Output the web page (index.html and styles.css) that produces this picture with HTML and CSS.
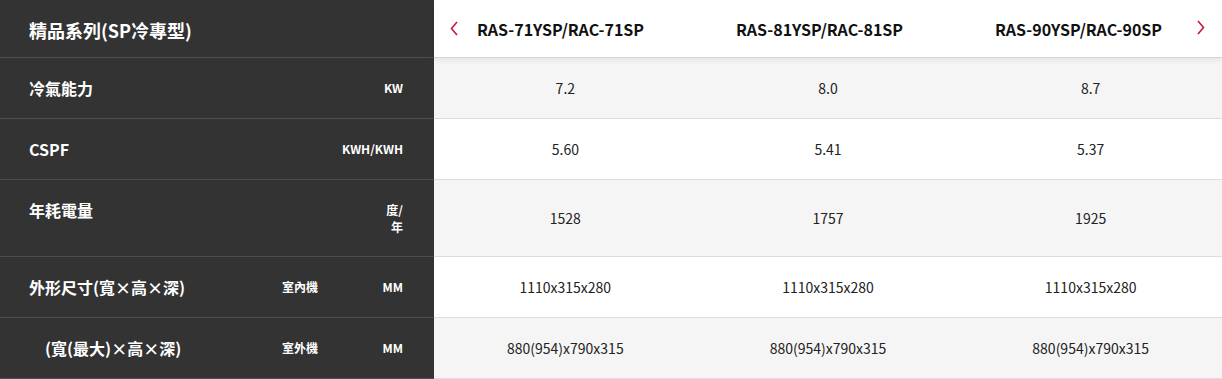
FILE: index.html
```html
<!DOCTYPE html>
<html lang="zh-Hant">
<head>
<meta charset="utf-8">
<title>精品系列(SP冷專型)</title>
<link rel="stylesheet" href="styles.css">
</head>
<body>
<div class="spec">
  <div class="row row-head">
    <div class="side side-head">
      <div class="title">精品系列(SP冷專型)</div>
    </div>
    <div class="models">
      <button class="nav nav-prev" aria-label="上一個">
        <svg width="8" height="15" viewBox="0 0 8 15"><path d="M7 1 L1.5 7.5 L7 14" fill="none" stroke="currentColor" stroke-width="1.6"/></svg>
      </button>
      <div class="model-list">
        <div class="model">RAS-71YSP/RAC-71SP</div>
        <div class="model">RAS-81YSP/RAC-81SP</div>
        <div class="model">RAS-90YSP/RAC-90SP</div>
      </div>
      <button class="nav nav-next" aria-label="下一個">
        <svg width="8" height="15" viewBox="0 0 8 15"><path d="M1 1 L6.5 7.5 L1 14" fill="none" stroke="currentColor" stroke-width="1.6"/></svg>
      </button>
    </div>
  </div>

  <div class="row shade">
    <div class="side"><div class="label">冷氣能力</div><div class="sub"></div><div class="unit">KW</div></div>
    <div class="cells"><div class="cell">7.2</div><div class="cell">8.0</div><div class="cell">8.7</div></div>
  </div>

  <div class="row">
    <div class="side"><div class="label">CSPF</div><div class="sub"></div><div class="unit">KWH/KWH</div></div>
    <div class="cells"><div class="cell">5.60</div><div class="cell">5.41</div><div class="cell">5.37</div></div>
  </div>

  <div class="row shade">
    <div class="side"><div class="label">年耗電量</div><div class="sub"></div><div class="unit">度/<br>年</div></div>
    <div class="cells"><div class="cell">1528</div><div class="cell">1757</div><div class="cell">1925</div></div>
  </div>

  <div class="row">
    <div class="side"><div class="label">外形尺寸(寬×高×深)</div><div class="sub">室內機</div><div class="unit">MM</div></div>
    <div class="cells"><div class="cell">1110x315x280</div><div class="cell">1110x315x280</div><div class="cell">1110x315x280</div></div>
  </div>

  <div class="row shade">
    <div class="side"><div class="label indent">(寬(最大)×高×深)</div><div class="sub">室外機</div><div class="unit">MM</div></div>
    <div class="cells"><div class="cell">880(954)x790x315</div><div class="cell">880(954)x790x315</div><div class="cell">880(954)x790x315</div></div>
  </div>
</div>
</body>
</html>
```

FILE: styles.css
```css
html, body {
  margin: 0;
  padding: 0;
  background: #ffffff;
}

body {
  font-family: "Noto Sans CJK TC", "Noto Sans", "Liberation Sans", sans-serif;
  color: #222222;
}

.spec {
  display: flex;
  flex-direction: column;
  width: 1222px;
}

.row {
  display: flex;
  min-height: 61px;
}

.side {
  width: 434px;
  flex: none;
  box-sizing: border-box;
  background: #333333;
  color: #ffffff;
  border-bottom: 1px solid #4e4e4e;
  display: grid;
  grid-template-columns: 253px 1fr auto;
  padding: 0 31px 0 29px;
}

.label {
  font-size: 16px;
  font-weight: 700;
  line-height: 24px;
  padding-top: 18px;
}

.label.indent {
  padding-left: 16px;
}

.sub,
.unit {
  font-size: 12px;
  font-weight: 700;
  line-height: 17px;
  padding: 21px 0 21px;
}

.unit {
  text-align: right;
}

.cells {
  flex: 1;
  display: grid;
  grid-template-columns: repeat(3, 1fr);
  border-bottom: 1px solid #dddddd;
  background: #ffffff;
}

.shade .cells {
  background: #f5f5f5;
}

.cell {
  display: flex;
  align-items: center;
  justify-content: center;
  font-size: 14px;
  line-height: 20px;
  color: #222222;
}

/* header row */
.row-head {
  min-height: 58px;
  position: relative;
  z-index: 1;
}

.side-head {
  display: flex;
  align-items: center;
  padding-top: 2px;
}

.title {
  font-size: 18px;
  font-weight: 700;
  line-height: 26px;
}

.models {
  flex: 1;
  position: relative;
  display: flex;
  align-items: center;
  background: #ffffff;
  border-bottom: 1px solid #d4d4d4;
  box-shadow: 0 2px 6px rgba(0, 0, 0, 0.08);
}

.model-list {
  display: grid;
  grid-template-columns: repeat(3, 259px);
  margin-left: -3px;
}

.model {
  text-align: center;
  font-size: 16px;
  font-weight: 700;
  line-height: 24px;
  color: #111111;
}

.nav {
  position: absolute;
  top: 21px;
  width: 8px;
  height: 15px;
  padding: 0;
  border: 0;
  background: none;
  color: #c8163c;
  display: flex;
}

.nav-prev {
  left: 16px;
}

.nav-next {
  right: 17px;
  top: 20px;
}
```
